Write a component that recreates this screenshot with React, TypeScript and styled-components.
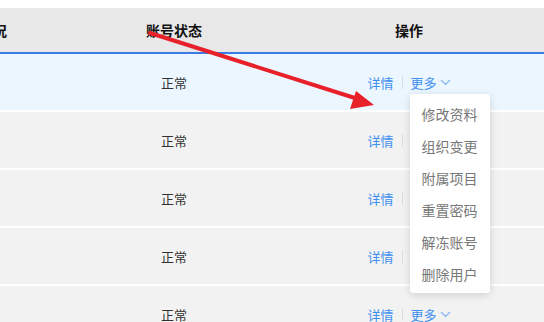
import styled, { createGlobalStyle } from "styled-components";

const GlobalStyle = createGlobalStyle`
  html, body {
    margin: 0;
    padding: 0;
    background: #fff;
    overflow: hidden;
  }
  body {
    font-family: "Noto Sans CJK SC", "Noto Sans", sans-serif;
  }
`;

const Page = styled.div`
  position: relative;
  width: 544px;
  height: 322px;
  overflow: hidden;
  padding-top: 8px;
  box-sizing: border-box;
`;

const Table = styled.div`
  margin-left: -74px;
  width: 618px;
  display: flex;
  flex-direction: column;
  gap: 2px;
`;

const COLUMNS = "134px 228px 242px 1fr";

const HeaderRow = styled.div`
  display: grid;
  grid-template-columns: ${COLUMNS};
  height: 44px;
  align-items: center;
  background: #e8e8e8;
  border-bottom: 2px solid #3b7be6;
  margin-bottom: -2px;
`;

const HeadCell = styled.div`
  text-align: center;
  font-size: 14px;
  font-weight: 700;
  color: #111;
  white-space: nowrap;
`;

const Row = styled.div<{ $active?: boolean }>`
  display: grid;
  grid-template-columns: ${COLUMNS};
  height: 56px;
  align-items: center;
  background: ${({ $active }) => ($active ? "#ecf6ff" : "#f2f2f2")};
  &:first-of-type {
    height: 57px;
  }
`;

const Cell = styled.div`
  text-align: center;
  font-size: 13px;
  color: #333;
  white-space: nowrap;
`;

const Actions = styled.div`
  display: flex;
  justify-content: center;
  align-items: center;
  font-size: 13px;
  position: relative;
`;

const Link = styled.span`
  color: #3f8ff0;
  cursor: pointer;
  display: inline-flex;
  align-items: center;
`;

const Divider = styled.span`
  width: 1px;
  height: 13px;
  background: #dcdcdc;
  margin: 0 8px 0 8px;
`;

const Chevron = () => (
  <svg width="11" height="7" viewBox="0 0 11 7" style={{ marginLeft: 3 }}>
    <path d="M1 1 L5.5 5.5 L10 1" fill="none" stroke="#7fb2f2" strokeWidth="1.1" />
  </svg>
);

const More = () => (
  <Link>
    更多
    <Chevron />
  </Link>
);

const Menu = styled.div`
  position: absolute;
  left: -1px;
  top: calc(50% + 12px);
  width: 80px;
  padding: 4px 0 3px;
  background: #fff;
  border-radius: 3px;
  box-shadow: 0 2px 8px rgba(0, 0, 0, 0.14);
  z-index: 2;
`;

const MenuItem = styled.div`
  height: 32px;
  line-height: 32px;
  padding-left: 12px;
  font-size: 14px;
  color: #777;
  white-space: nowrap;
`;

const MoreWrap = styled.span<{ $hidden?: boolean }>`
  position: relative;
  display: inline-flex;
  align-items: center;
  visibility: ${({ $hidden }) => ($hidden ? "hidden" : "visible")};
`;

const Arrow = styled.svg`
  position: absolute;
  left: 0;
  top: 0;
  pointer-events: none;
  z-index: 3;
`;

const menuItems = ["修改资料", "组织变更", "附属项目", "重置密码", "解冻账号", "删除用户"];

const rows = [
  { more: true, menu: true },
  { more: false },
  { more: false },
  { more: false },
  { more: true },
];

export default function App() {
  return (
    <>
      <GlobalStyle />
      <Page>
        <Table>
          <HeaderRow>
            <HeadCell>状况</HeadCell>
            <HeadCell>账号状态</HeadCell>
            <HeadCell>操作</HeadCell>
            <HeadCell />
          </HeaderRow>
          {rows.map((r, i) => (
            <Row key={i} $active={i === 0}>
              <Cell />
              <Cell>正常</Cell>
              <Actions>
                <Link>详情</Link>
                <Divider />
                <MoreWrap $hidden={!r.more}>
                  <More />
                  {r.menu && (
                    <Menu>
                      {menuItems.map((m) => (
                        <MenuItem key={m}>{m}</MenuItem>
                      ))}
                    </Menu>
                  )}
                </MoreWrap>
              </Actions>
              <Cell />
            </Row>
          ))}
        </Table>
        <Arrow width="544" height="322" viewBox="0 0 544 322">
          <line x1="150" y1="33" x2="358" y2="99" stroke="#e8202a" strokeWidth="4" strokeLinecap="round" />
          <polygon points="374,105 356,91 350,109" fill="#e8202a" />
        </Arrow>
      </Page>
    </>
  );
}
